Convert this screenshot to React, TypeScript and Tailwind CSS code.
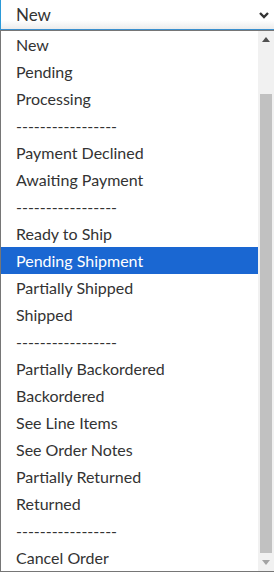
const options = [
  'New',
  'Pending',
  'Processing',
  '-----------------',
  'Payment Declined',
  'Awaiting Payment',
  '-----------------',
  'Ready to Ship',
  'Pending Shipment',
  'Partially Shipped',
  'Shipped',
  '-----------------',
  'Partially Backordered',
  'Backordered',
  'See Line Items',
  'See Order Notes',
  'Partially Returned',
  'Returned',
  '-----------------',
  'Cancel Order',
]

export default function App() {
  const active = 'Pending Shipment'

  return (
    <div className="w-[274px] h-[572px] bg-white overflow-hidden text-[16px] text-[#333]" style={{ fontFamily: 'Lato, "Open Sans", sans-serif' }}>
      {/* closed select */}
      <div className="h-[29px] flex items-center justify-between pl-[15px] pr-[3px] border-l border-[#2b9ad8] bg-gradient-to-b from-white from-70% to-[#ececec]">
        <span className="text-[17px] pt-[1px]">New</span>
        <svg width="12" height="10" viewBox="0 0 12 10" className="mr-[1px]">
          <path d="M2 3 L6 7 L10 3" fill="none" stroke="#333" strokeWidth="2.4" />
        </svg>
      </div>
      <div className="h-px bg-[#3a8fce]" />

      {/* open list */}
      <div className="flex h-[542px] border-t border-l border-b border-[#767676]">
        <ul className="flex-1">
          {options.map((o, i) => (
            <li
              key={i}
              className={
                'h-[27px] flex items-center pl-[15px] pt-[1px] ' +
                (o === active ? 'bg-[#1a67d2] text-white' : '')
              }
            >
              {o}
            </li>
          ))}
        </ul>
        <div className="w-[16px] bg-[#f1f1f1] flex flex-col items-center">
          <div className="h-[17px] flex items-center justify-center">
            <svg width="8" height="5" viewBox="0 0 8 5"><path d="M0 5 L4 0 L8 5 Z" fill="#505050" /></svg>
          </div>
          <div className="w-[12px] flex-1 bg-[#c1c1c1] mt-[46px] mb-[1px]" />
          <div className="h-[17px] flex items-center justify-center">
            <svg width="8" height="5" viewBox="0 0 8 5"><path d="M0 0 L8 0 L4 5 Z" fill="#a3a3a3" /></svg>
          </div>
        </div>
      </div>
    </div>
  )
}
